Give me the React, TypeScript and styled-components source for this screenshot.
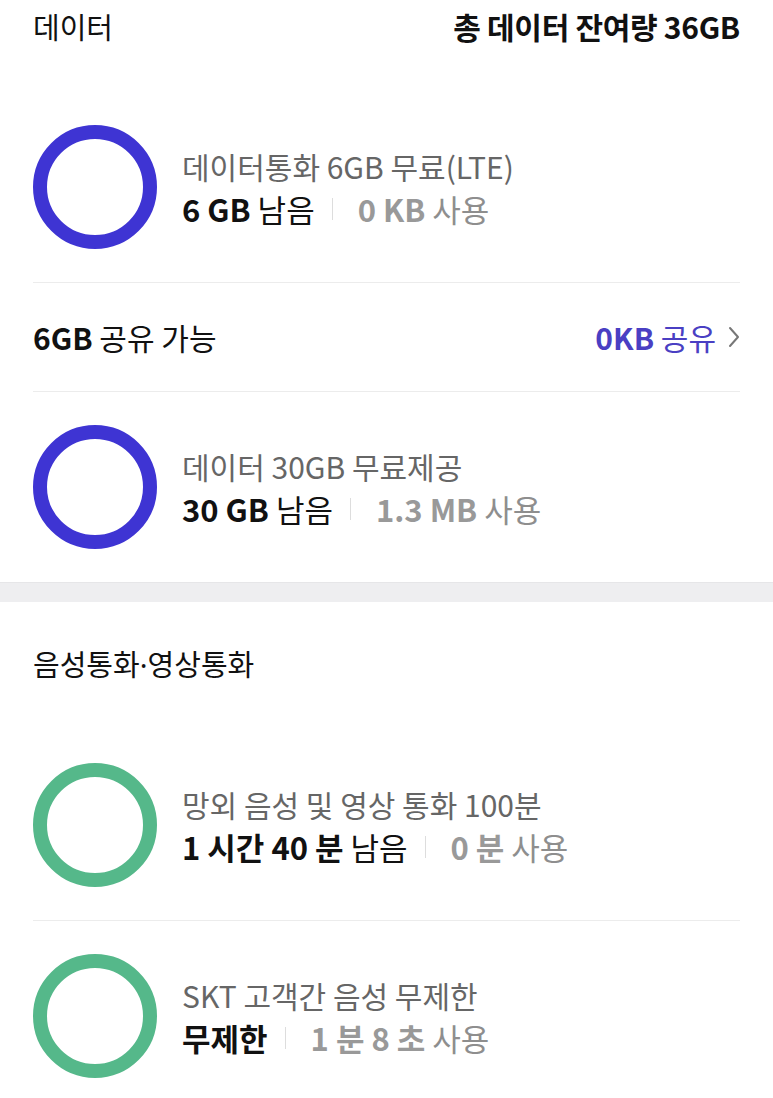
import React from "react";
import styled, { createGlobalStyle } from "styled-components";

const GlobalStyle = createGlobalStyle`
    html, body {
        margin: 0;
        padding: 0;
        background: #ffffff;
    }
    body {
        font-family: "Noto Sans CJK KR", "Noto Sans", sans-serif;
        color: #111111;
        -webkit-font-smoothing: antialiased;
    }
`;

const Page = styled.div`
    width: 773px;
    height: 1098px;
    overflow: hidden;
    background: #ffffff;
`;

const Section = styled.section`
    padding: 0 33px;
`;

const SectionHeader = styled.div<{ $height: number; $align: string }>`
    display: flex;
    align-items: ${(p) => p.$align};
    justify-content: space-between;
    height: ${(p) => p.$height}px;
    box-sizing: border-box;
`;

const HeaderTitle = styled.span<{ $offset: number }>`
    margin-top: ${(p) => p.$offset}px;
    font-size: 29px;
    line-height: 40px;
    font-weight: 400;
    color: #111111;
`;

const HeaderTotal = styled.span`
    margin-top: 6px;
    font-size: 30px;
    line-height: 40px;
    font-weight: 700;
    letter-spacing: -0.3px;
    color: #111111;
`;

const Dot = styled.span`
    font-family: "Noto Sans", sans-serif;
`;

const UsageRow = styled.div<{ $last?: boolean }>`
    display: flex;
    align-items: center;
    height: 190px;
    border-bottom: ${(p) => (p.$last ? "none" : "1px solid #ececec")};
`;

const Ring = styled.div<{ $color: string }>`
    width: 124px;
    height: 124px;
    border-radius: 50%;
    border: 14px solid ${(p) => p.$color};
    box-sizing: border-box;
    flex-shrink: 0;
`;

const UsageText = styled.div`
    display: flex;
    flex-direction: column;
    margin-left: 25px;
`;

const PlanName = styled.div`
    font-size: 30px;
    line-height: 44px;
    color: #666666;
`;

const UsageLine = styled.div`
    display: flex;
    align-items: center;
    font-size: 31px;
    line-height: 42px;
`;

const Remaining = styled.span`
    color: #111111;
    b {
        font-weight: 700;
    }
`;

const Used = styled.span`
    color: #8e8e8e;
    b {
        font-weight: 700;
        color: #999999;
    }
`;

const Bar = styled.span`
    width: 1px;
    height: 22px;
    background: #dddddd;
    margin: 0 25px 0 17px;
`;

const ShareRow = styled.div`
    display: flex;
    align-items: center;
    justify-content: space-between;
    height: 108px;
    border-bottom: 1px solid #ececec;
`;

const ShareLabel = styled.span`
    font-size: 30px;
    color: #111111;
    b {
        font-weight: 700;
    }
`;

const ShareLink = styled.span`
    display: flex;
    align-items: center;
    gap: 12px;
    font-size: 30px;
    color: #4a3fc3;
    b {
        font-weight: 700;
    }
`;

const Gap = styled.div`
    height: 20px;
    background: #eeeef0;
    border-top: 1px solid #e6e6e8;
    box-sizing: border-box;
`;

const Chevron = () => (
    <svg width="12" height="22" viewBox="0 0 12 22" fill="none">
        <polyline points="2,2 10,11 2,20" stroke="#777777" strokeWidth="2" strokeLinecap="round" strokeLinejoin="round" />
    </svg>
);

interface UsageItemProps {
    color: string;
    name: string;
    remaining: React.ReactNode;
    used: React.ReactNode;
    last?: boolean;
}

const UsageItem = (props: UsageItemProps) => (
    <UsageRow $last={props.last}>
        <Ring $color={props.color} />
        <UsageText>
            <PlanName>{props.name}</PlanName>
            <UsageLine>
                <Remaining>{props.remaining}</Remaining>
                <Bar />
                <Used>{props.used}</Used>
            </UsageLine>
        </UsageText>
    </UsageRow>
);

const DATA_COLOR = "#3e34d3";
const VOICE_COLOR = "#55b88a";

const App = () => (
    <Page>
        <GlobalStyle />
        <Section>
            <SectionHeader $height={92} $align="flex-start">
                <HeaderTitle $offset={6}>데이터</HeaderTitle>
                <HeaderTotal>총 데이터 잔여량 36GB</HeaderTotal>
            </SectionHeader>
            <UsageItem
                color={DATA_COLOR}
                name="데이터통화 6GB 무료(LTE)"
                remaining={<><b>6 GB</b> 남음</>}
                used={<><b>0 KB</b> 사용</>}
            />
            <ShareRow>
                <ShareLabel><b>6GB</b> 공유 가능</ShareLabel>
                <ShareLink>
                    <span><b>0KB</b> 공유</span>
                    <Chevron />
                </ShareLink>
            </ShareRow>
            <UsageItem
                color={DATA_COLOR}
                name="데이터 30GB 무료제공"
                remaining={<><b>30 GB</b> 남음</>}
                used={<><b>1.3 MB</b> 사용</>}
                last
            />
        </Section>
        <Gap />
        <Section>
            <SectionHeader $height={128} $align="center">
                <HeaderTitle $offset={-4}>음성통화<Dot>·</Dot>영상통화</HeaderTitle>
            </SectionHeader>
            <UsageItem
                color={VOICE_COLOR}
                name="망외 음성 및 영상 통화 100분"
                remaining={<><b>1 시간 40 분</b> 남음</>}
                used={<><b>0 분</b> 사용</>}
            />
            <UsageItem
                color={VOICE_COLOR}
                name="SKT 고객간 음성 무제한"
                remaining={<b>무제한</b>}
                used={<><b>1 분 8 초</b> 사용</>}
                last
            />
        </Section>
    </Page>
);

export default App;
